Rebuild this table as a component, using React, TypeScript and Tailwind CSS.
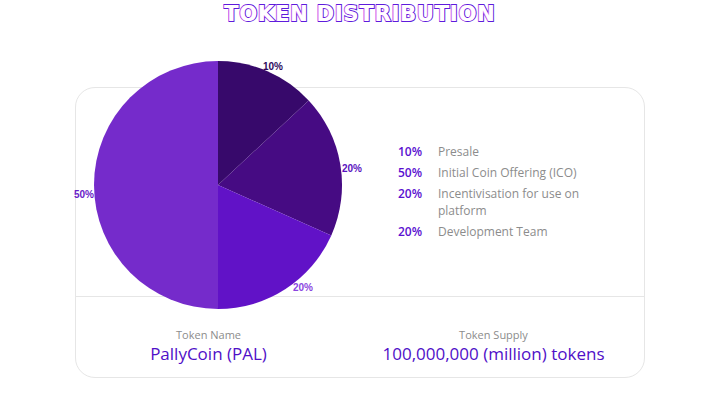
const slices = [
  { d: "M148 130 L148 6 A124 124 0 0 1 238.7 45.4 Z", fill: "#37096b" },
  { d: "M148 130 L238.7 45.4 A124 124 0 0 1 261.3 180.4 Z", fill: "#460b83" },
  { d: "M148 130 L261.3 180.4 A124 124 0 0 1 148 254 Z", fill: "#6112c7" },
  { d: "M148 130 L148 254 A124 124 0 0 1 148 6 Z", fill: "#752bcb" },
];

const labels = [
  { x: 203, y: 11, text: "10%", fill: "#2e0a5c" },
  { x: 282, y: 113, text: "20%", fill: "#5a12c0" },
  { x: 233, y: 232, text: "20%", fill: "#8b45e0" },
  { x: 14, y: 139, text: "50%", fill: "#6a20c8" },
];

const legend = [
  { pct: "10%", label: "Presale" },
  { pct: "50%", label: "Initial Coin Offering (ICO)" },
  { pct: "20%", label: "Incentivisation for use on platform" },
  { pct: "20%", label: "Development Team" },
];

export default function App() {
  return (
    <main className="min-h-[401px] w-[720px] bg-white font-['Open_Sans',sans-serif]">
      <h1 className="pt-[1px] text-center font-['DejaVu_Sans',sans-serif] text-[21px] font-bold leading-[26px] tracking-[0.8px] text-white [-webkit-text-stroke:2px_#5e1bdc] [paint-order:stroke_fill] [text-shadow:-1px_0_0_#e27af0]">
        TOKEN DISTRIBUTION
      </h1>

      <div className="mx-[75px] mt-[60px] h-[291px] rounded-[20px] border border-[#e6e6e6]">
        <div className="flex h-[208px]">
          <svg
            className="-ml-[6px] -mt-[33px] shrink-0"
            width="300"
            height="260"
            viewBox="0 0 300 260"
          >
            {slices.map((s) => (
              <path key={s.d} d={s.d} fill={s.fill} />
            ))}
            {labels.map((l) => (
              <text
                key={l.x}
                x={l.x}
                y={l.y}
                fill={l.fill}
                fontSize="10"
                fontWeight="700"
                fontFamily="Liberation Sans, sans-serif"
                textAnchor="middle"
                dominantBaseline="central"
              >
                {l.text}
              </text>
            ))}
          </svg>

          <ul className="-mt-[2px] ml-[28px] flex flex-col justify-center gap-[4px] text-[12px] leading-[17px]">
            {legend.map((row) => (
              <li key={row.label} className="flex">
                <span className="w-[40px] shrink-0 font-semibold text-[#5a10d0]">
                  {row.pct}
                </span>
                <span className="w-[155px] text-[#8c8c8c]">{row.label}</span>
              </li>
            ))}
          </ul>
        </div>

        <div className="grid grid-cols-2 gap-5 border-t border-[#e6e6e6] pr-[18px] pt-[31px]">
          <div className="text-center">
            <p className="text-[11px] leading-[14px] text-[#8c8c8c]">Token Name</p>
            <p className="text-[17px] leading-[24px] text-[#5010c8]">PallyCoin (PAL)</p>
          </div>
          <div className="text-center">
            <p className="text-[11px] leading-[14px] text-[#8c8c8c]">Token Supply</p>
            <p className="text-[17px] leading-[24px] text-[#5010c8]">
              100,000,000 (million) tokens
            </p>
          </div>
        </div>
      </div>
    </main>
  );
}
